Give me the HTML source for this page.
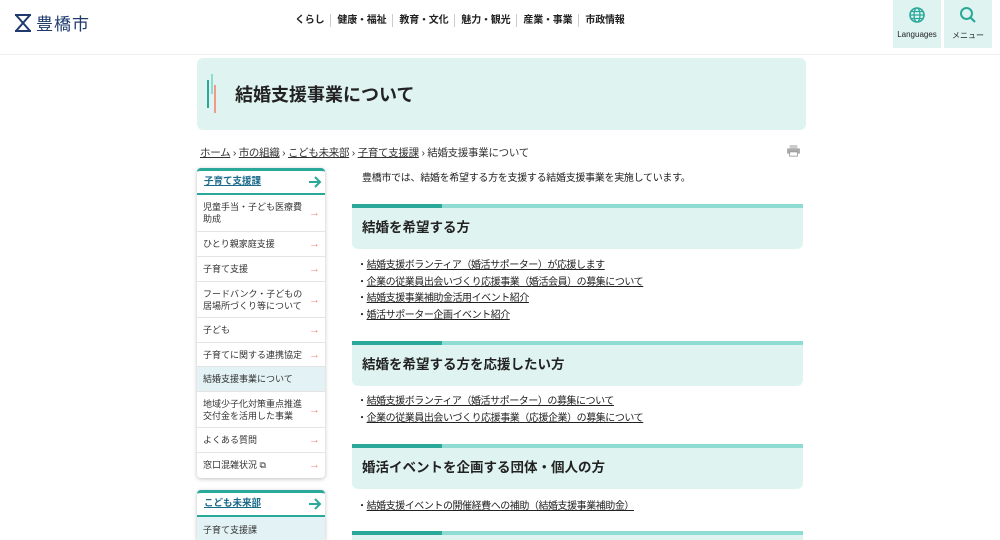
<!DOCTYPE html>
<html><head><meta charset="utf-8"><style>
*{margin:0;padding:0;box-sizing:border-box}
html,body{width:1000px;height:540px;overflow:hidden}
body{background:#fff;font-family:"Liberation Sans","Noto Sans CJK JP",sans-serif;color:#222;position:relative}
.abs{position:absolute}
.hdr{left:0;top:0;width:1000px;height:55px;border-bottom:1px solid #eee}
.nav{top:14px;left:295px;font-size:10px;font-weight:bold;display:flex;letter-spacing:-0.2px}
.nav span{padding:0 6px;border-left:1px solid #ccc;line-height:13px}
.nav span:first-child{border-left:none;padding-left:0}
.btn{top:0;width:48px;height:48px;background:#dff4f0;font-size:8px;text-align:center;color:#222}
.title{left:197px;top:58px;width:609px;height:72px;background:#dff4f0;border-radius:6px}
.bc{left:200px;top:145px;font-size:10.5px;color:#333;letter-spacing:-0.3px}
.side{left:197px;width:128px;background:#fff;border-top:3px solid #2aa89a;border-radius:4px;box-shadow:0 1px 4px rgba(0,0,0,.25);font-size:9px;overflow:hidden}
.side .h{height:24px;border-bottom:2px solid #2aa89a;padding:0 7px;line-height:22px;font-weight:bold;color:#1a6a8a;text-decoration:underline;font-size:9.5px;position:relative}
.side .h svg{position:absolute;right:3px;top:5px}
.side .i{border-bottom:1px solid #e4e4e4;padding:0 20px 0 6px;display:flex;align-items:center;position:relative;line-height:12px;color:#333}
.side .i:after{content:"→";position:absolute;right:5px;top:50%;margin-top:-7px;line-height:14px;color:#f08878;font-size:11px}
.side .i.on{background:#e3f3f5}
.side .i.on:after{content:""}
.main{left:352px;width:451px;font-size:10px;color:#222}
.hd{position:absolute;left:352px;width:451px;height:45px;background:#dff4f0;border-radius:0 0 6px 6px;border-top:4px solid #8fdcd2;font-size:13.5px;font-weight:bold;padding:10px 10px;line-height:20px}
.hd:before{content:"";position:absolute;left:0;top:-4px;width:90px;height:4px;background:#2aa89a}
.lk{position:absolute;left:357px;font-size:10px;color:#222;letter-spacing:-0.45px}
</style></head><body>
<div class="abs hdr"></div>
<div class="abs" style="left:13px;top:10px;display:flex;align-items:center">
<svg width="20" height="18" viewBox="0 0 20 18"><path d="M2 1H18M2 17H18M3 1L17 17M17 1L3 17" stroke="#1f3a6e" stroke-width="2" fill="none"/></svg>
<span style="font-size:17px;color:#1f3a6e;margin-left:3px;letter-spacing:1px">豊橋市</span></div>
<div class="abs nav"><span>くらし</span><span>健康・福祉</span><span>教育・文化</span><span>魅力・観光</span><span>産業・事業</span><span>市政情報</span></div>
<div class="abs btn" style="left:893px"><svg width="18" height="18" viewBox="0 0 18 18" style="margin-top:6px"><circle cx="9" cy="9" r="7" fill="none" stroke="#2aa89a" stroke-width="1.6"/><ellipse cx="9" cy="9" rx="3" ry="7" fill="none" stroke="#2aa89a" stroke-width="1.3"/><path d="M2 9H16M3 5.5H15M3 12.5H15" stroke="#2aa89a" stroke-width="1.2"/></svg><div style="margin-top:4px">Languages</div></div>
<div class="abs btn" style="left:944px"><svg width="18" height="18" viewBox="0 0 18 18" style="margin-top:6px"><circle cx="7.5" cy="7.5" r="5.5" fill="none" stroke="#2aa89a" stroke-width="2"/><path d="M11.5 11.5L16 16" stroke="#2aa89a" stroke-width="2.2"/></svg><div style="margin-top:4px">メニュー</div></div>

<div class="abs title">
<div class="abs" style="left:10px;top:22px;width:2px;height:28px;background:#2aa89a"></div>
<div class="abs" style="left:14px;top:16px;width:2px;height:20px;background:#8fdcd2"></div>
<div class="abs" style="left:17px;top:27px;width:2px;height:28px;background:#f29a88"></div>
<div class="abs" style="left:38px;top:23px;font-size:18px;font-weight:bold">結婚支援事業について</div>
</div>
<div class="abs bc"><u>ホーム</u> › <u>市の組織</u> › <u>こども未来部</u> › <u>子育て支援課</u> › 結婚支援事業について</div>
<svg class="abs" style="left:787px;top:145px" width="13" height="12" viewBox="0 0 15 14"><rect x="3" y="0" width="9" height="4" fill="#ccc"/><rect x="0" y="4" width="15" height="6" fill="#aaa"/><rect x="3" y="8" width="9" height="5" fill="#fff" stroke="#999"/></svg>

<div class="abs side" style="top:168px;height:310px">
<div class="h">子育て支援課<svg width="14" height="12" viewBox="0 0 14 12"><path d="M1 6H12M7 1L12 6L7 11" stroke="#2aa89a" stroke-width="2" fill="none"/></svg></div>
<div class="i" style="height:37px">児童手当・子ども医療費助成</div>
<div class="i" style="height:25px">ひとり親家庭支援</div>
<div class="i" style="height:25px">子育て支援</div>
<div class="i" style="height:36px">フードバンク・子どもの居場所づくり等について</div>
<div class="i" style="height:25px">子ども</div>
<div class="i" style="height:24px">子育てに関する連携協定</div>
<div class="i on" style="height:25px">結婚支援事業について</div>
<div class="i" style="height:36px">地域少子化対策重点推進交付金を活用した事業</div>
<div class="i" style="height:25px">よくある質問</div>
<div class="i" style="height:24px;border:none">窓口混雑状況 ⧉</div>
</div>
<div class="abs side" style="top:490px;height:50px;border-radius:4px 4px 0 0">
<div class="h">こども未来部<svg width="14" height="12" viewBox="0 0 14 12"><path d="M1 6H12M7 1L12 6L7 11" stroke="#2aa89a" stroke-width="2" fill="none"/></svg></div>
<div class="i on" style="height:26px">子育て支援課</div>
</div>

<div class="abs main" style="top:169px;left:362px;letter-spacing:-0.3px">豊橋市では、結婚を希望する方を支援する結婚支援事業を実施しています。</div>
<div class="hd" style="top:204px">結婚を希望する方</div>
<div class="lk" style="top:256px">・<u>結婚支援ボランティア（婚活サポーター）が応援します</u></div>
<div class="lk" style="top:273px">・<u>企業の従業員出会いづくり応援事業（婚活会員）の募集について</u></div>
<div class="lk" style="top:289px">・<u>結婚支援事業補助金活用イベント紹介</u></div>
<div class="lk" style="top:306px">・<u>婚活サポーター企画イベント紹介</u></div>
<div class="hd" style="top:341px">結婚を希望する方を応援したい方</div>
<div class="lk" style="top:392px">・<u>結婚支援ボランティア（婚活サポーター）の募集について</u></div>
<div class="lk" style="top:409px">・<u>企業の従業員出会いづくり応援事業（応援企業）の募集について</u></div>
<div class="hd" style="top:444px">婚活イベントを企画する団体・個人の方</div>
<div class="lk" style="top:497px">・<u>結婚支援イベントの開催経費への補助（結婚支援事業補助金）</u></div>
<div class="hd" style="top:531px;height:9px;border-radius:0;padding:0"></div>
</body></html>
